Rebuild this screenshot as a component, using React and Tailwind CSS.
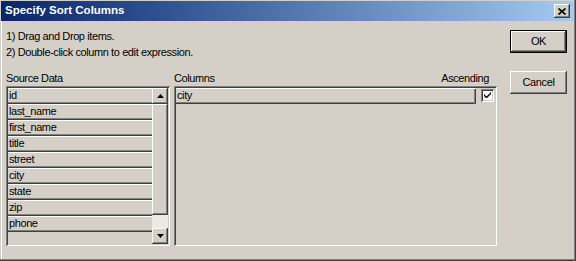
import React from "react";

const raised =
  "shadow-[inset_-1px_-1px_0_#404040,inset_1px_1px_0_#ffffff,inset_-2px_-2px_0_#808080,inset_2px_2px_0_#d4d0c8]";
const sunken =
  "shadow-[inset_1px_1px_0_#808080,inset_-1px_-1px_0_#ffffff,inset_2px_2px_0_#404040,inset_-2px_-2px_0_#d4d0c8]";

const font = { fontFamily: '"Liberation Sans", Arial, sans-serif' };

function Arrow({ down }) {
  return (
    <svg width="7" height="4" viewBox="0 0 7 4" className="block">
      {down ? (
        <polygon points="0,0 7,0 3.5,4" fill="#000" />
      ) : (
        <polygon points="3.5,0 7,4 0,4" fill="#000" />
      )}
    </svg>
  );
}

const sourceItems = [
  "id",
  "last_name",
  "first_name",
  "title",
  "street",
  "city",
  "state",
  "zip",
  "phone",
];

export default function App() {
  return (
    <div
      className="w-[576px] h-[261px] bg-[#d4d0c8] flex flex-col pt-[1px] pl-[1px] pr-[2px] pb-[2px] shadow-[inset_-1px_-1px_0_#404040,inset_-2px_-2px_0_#808080,inset_1px_1px_0_#d4d0c8,inset_2px_2px_0_#ffffff] text-[11px] tracking-[-0.4px] text-black overflow-hidden"
      style={font}
    >
      {/* title bar */}
      <div className="h-[20px] flex items-center bg-gradient-to-r from-[#0a246a] to-[#a6caf0] pl-[4px] pr-[4px]">
        <div className="text-white font-bold text-[11.5px] tracking-normal flex-1 leading-none">
          Specify Sort Columns
        </div>
        <div
          className={`w-[16px] h-[14px] bg-[#d4d0c8] flex items-center justify-center ${raised}`}
        >
          <svg width="8" height="7" viewBox="0 0 8 7" className="block">
            <path d="M0.5 0.5 L7.5 6.5 M7.5 0.5 L0.5 6.5" stroke="#000" strokeWidth="1.6" />
          </svg>
        </div>
      </div>

      {/* body */}
      <div className="flex flex-1 pl-[5px]">
        <div className="w-[491px] flex flex-col pt-[7px]">
          <div className="leading-[16px]">1) Drag and Drop items.</div>
          <div className="leading-[16px]">2) Double-click column to edit expression.</div>

          <div className="flex mt-[10px] gap-[4px]">
            {/* Source data */}
            <div className="w-[164px] flex flex-col">
              <div className="leading-[16px] h-[16px]">Source Data</div>
              <div className={`h-[160px] p-[2px] flex ${sunken}`}>
                <div className="flex-1 flex flex-col">
                  {sourceItems.map((it) => (
                    <div
                      key={it}
                      className="h-[16px] leading-[15px] pl-[1px] shadow-[inset_0_1px_0_#ffffff,inset_0_-1px_0_#404040,inset_0_-2px_0_#808080]"
                    >
                      {it}
                    </div>
                  ))}
                </div>
                <div className="w-[16px] flex flex-col">
                  <div
                    className={`h-[16px] bg-[#d4d0c8] flex items-center justify-center ${raised}`}
                  >
                    <Arrow />
                  </div>
                  <div className={`h-[111px] bg-[#d4d0c8] ${raised}`} />
                  <div className="flex-1 bg-[#ebe9e4]" />
                  <div
                    className={`h-[16px] bg-[#d4d0c8] flex items-center justify-center ${raised}`}
                  >
                    <Arrow down />
                  </div>
                </div>
              </div>
            </div>

            {/* Columns */}
            <div className="w-[323px] flex flex-col">
              <div className="leading-[16px] h-[16px] flex justify-between pr-[8px]">
                <span>Columns</span>
                <span>Ascending</span>
              </div>
              <div className={`h-[160px] p-[2px] ${sunken}`}>
                <div className="flex items-start">
                  <div className="w-[300px] h-[16px] leading-[15px] pl-[1px] shadow-[inset_0_1px_0_#ffffff,inset_-1px_0_0_#404040,inset_-2px_0_0_#808080,inset_0_-1px_0_#404040,inset_0_-2px_0_#808080]">
                    city
                  </div>
                  <div
                    className={`ml-[5px] mt-[1px] w-[13px] h-[13px] bg-white flex items-center justify-center ${sunken}`}
                  >
                    <svg width="7" height="7" viewBox="0 0 7 7" className="block">
                      <polygon
                        points="0,2 0,4 2,6 3,6 7,2 7,0 2.5,4.5"
                        fill="#000"
                      />
                    </svg>
                  </div>
                </div>
              </div>
            </div>
          </div>
        </div>

        {/* buttons */}
        <div className="ml-[13px] flex flex-col pt-[9px] gap-[18px]">
          <div className="w-[57px] h-[23px] border border-black">
            <div
              className={`w-full h-full bg-[#d4d0c8] flex items-center justify-center ${raised}`}
            >
              OK
            </div>
          </div>
          <div
            className={`w-[57px] h-[23px] bg-[#d4d0c8] flex items-center justify-center ${raised}`}
          >
            Cancel
          </div>
        </div>
      </div>
    </div>
  );
}
